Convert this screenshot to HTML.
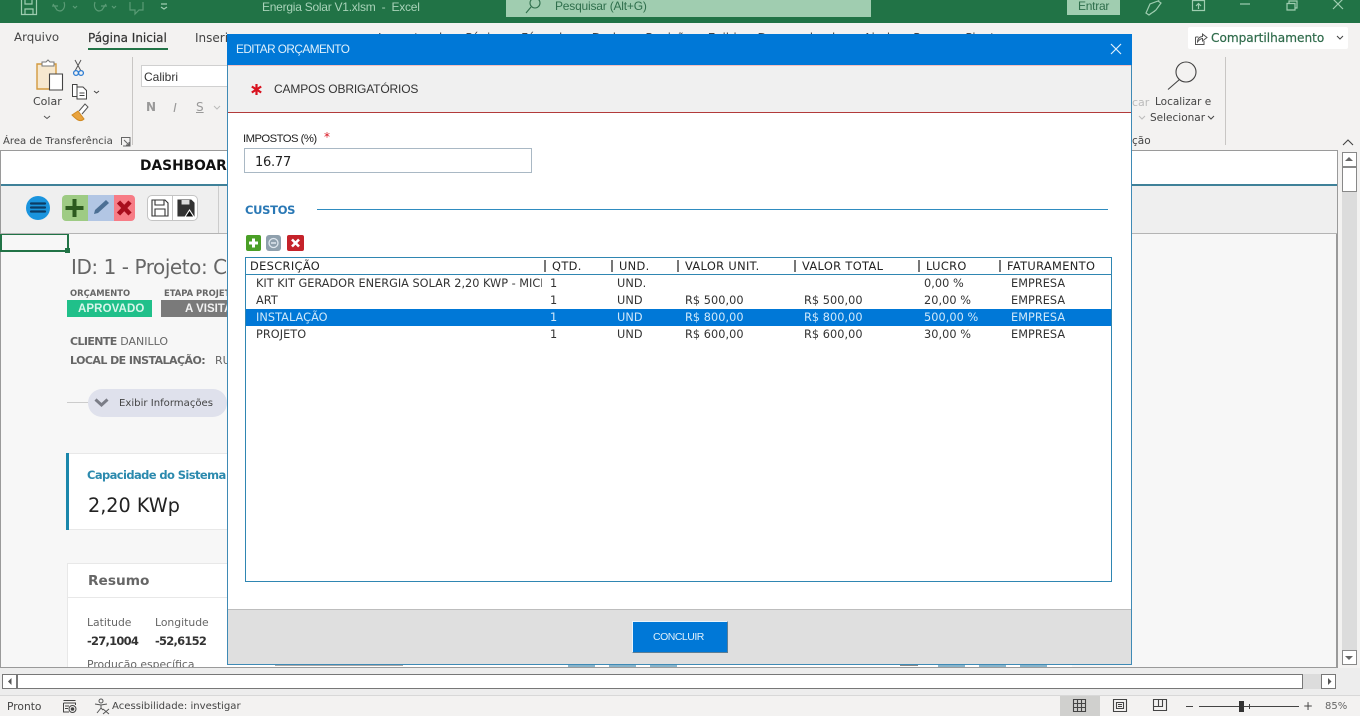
<!DOCTYPE html>
<html><head><meta charset="utf-8"><style>
html,body{margin:0;padding:0}
body{width:1360px;height:716px;overflow:hidden;position:relative;background:#f3f2f1;font-family:"DejaVu Sans","Liberation Sans",sans-serif;color:#333}
.t{position:absolute;white-space:nowrap;line-height:1}
.b{position:absolute}
svg{position:absolute;overflow:visible}
.ls{font-family:"Liberation Sans",sans-serif}
.c{font-size:11.3px;color:#333;letter-spacing:.05px}
.h{font-size:11.4px;color:#222;top:261px;letter-spacing:.35px}
.sep{position:absolute;top:260px;width:2px;height:12px;background:#777}
</style></head><body>
<!-- title bar -->
<div class="b" style="left:0;top:0;width:1360px;height:23px;background:#217346"></div>
<svg style="left:0;top:0" width="1360" height="23" fill="none" stroke="#9fcdb0" stroke-width="1.2">
<path d="M21.500 0V14.500H36.500V0M25 15V9H33V15M25 0V4H32V0"/>
<path d="M53 4L57 10C62 13 66 8 64 2M52 6H58" opacity=".45"/><path d="M73 6l2 2 2-2" opacity=".45"/>
<path d="M106 4L102 10C97 13 93 8 95 2M107 6H101" opacity=".45"/><path d="M112 6l2 2 2-2" opacity=".45"/>
<path d="M130 2V10H135V14L139 10H143V2" opacity=".45"/>
<path d="M161 4H167M161 7l3 2 3-2"/>
<path d="M1146 13L1150 4 1158 1 1161 3 1156 10 1149 15ZM1150 14L1155 11M1158 0L1162 -1"/>
<path d="M1192.500 .5H1204.500V10.500H1192.500ZM1198.500 9V4M1196 6L1198.500 3.500 1201 6"/>
<path d="M1240 4H1250"/>
<path d="M1287 3.500H1295V10H1287ZM1289 3V1H1297V8H1295"/>
<path d="M1333 -1L1343 9M1343 -1L1333 9"/>
</svg>
<div class="t ls" style="left:262px;top:1px;font-size:12px;color:#a9d3b9;letter-spacing:-.25px">Energia Solar V1.xlsm&nbsp; -&nbsp; Excel</div>
<div class="b" style="left:506px;top:0;width:365px;height:17px;background:#a0cdb0"></div>
<svg style="left:0;top:0" width="1360" height="23" fill="none" stroke="#2f6f4c" stroke-width="1.100"><circle cx="535" cy="3" r="5"/><path d="M531 7L526 13"/></svg>
<div class="t ls" style="left:555px;top:0;font-size:12px;color:#2f6f4c;letter-spacing:-.2px">Pesquisar (Alt+G)</div>
<div class="b" style="left:1067px;top:0;width:53px;height:15px;background:#a0cdb0"></div>
<div class="t ls" style="left:1078px;top:0;font-size:12px;color:#2f6f4c;letter-spacing:-.25px">Entrar</div>

<!-- ribbon tabs -->
<div class="t" style="left:14px;top:32px;font-size:11.800px;color:#444">Arquivo</div>
<div class="t" style="left:88px;top:32px;font-size:12px;color:#333;-webkit-text-stroke:.2px #333">Página Inicial</div>
<div class="b" style="left:88px;top:48px;width:80px;height:2px;background:#217346"></div>
<div class="t" style="left:195px;top:32px;font-size:12px;color:#444">Inserir</div>
<div class="t" style="left:378px;top:32px;font-size:12px;color:#444;word-spacing:12px">Layout da Página Fórmulas Dados Revisão Exibir Desenvolvedor Ajuda Power Pivot</div>
<div class="b" style="left:1188px;top:27px;width:160px;height:22px;background:#fff;border-radius:2px"></div>
<svg style="left:1194px;top:33px" width="14" height="12" fill="none" stroke="#555" stroke-width="1"><path d="M1.500 4V11.500H10V8M1.500 4H4.500M3.500 9C3.500 5.500 6 3.500 8.500 3.500V1L13 4.500 8.500 8V5.500C7 5.500 5 7 3.500 9Z"/></svg>
<div class="t" style="left:1211px;top:32px;font-size:12.100px;color:#2f6b4b;-webkit-text-stroke:.2px #2f6b4b">Compartilhamento</div>
<svg style="left:1336px;top:35px" width="10" height="6" fill="none" stroke="#444"><path d="M1 1l3 3 3-3"/></svg>

<!-- clipboard group -->
<svg style="left:30px;top:58px" width="80" height="70" fill="none">
<path d="M7 6H26V31H7Z" fill="#f6e8cf" stroke="#d39a3f" stroke-width="1.400"/>
<path d="M12 8V4H16L18 2 20 4H24V8Z" fill="#fff" stroke="#777"/>
<path d="M19.500 16H32.500V32H19.500Z" fill="#fff" stroke="#444" stroke-width="1.100"/>
<path d="M45 2L51 13M51 2L45 13" stroke="#555"/><circle cx="46" cy="15" r="2.400" stroke="#2b7cd3" stroke-width="1.300"/><circle cx="51" cy="15" r="2.400" stroke="#2b7cd3" stroke-width="1.300"/>
<path d="M42.500 26.500H47V38.500H42.500ZM47 29H53L56.500 32.500V41H47Z" fill="#fff" stroke="#444"/><path d="M49.500 35H54.500M49.500 37.500H54.500" stroke="#444"/>
<path d="M64 33l2.500 2 2.500-2" stroke="#444"/>
<path d="M42 57L48 53 54 61C50 65 46 61 42 57Z" fill="#e9a33d" stroke="#d18a22"/><path d="M49 53L55 46 58 49 52 56" fill="#fff" stroke="#555"/>
<path d="M14 58l3 2.500 3-2.500" stroke="#555"/>
</svg>
<div class="t" style="left:33px;top:96px;font-size:11px;color:#444">Colar</div>
<div class="t" style="left:3px;top:137px;font-size:10.100px;color:#444">Área de Transferência</div>
<svg style="left:120px;top:136px" width="12" height="12" fill="none" stroke="#666"><path d="M1.500 9V1.500H10V10H3M4 4L9 9M9 6V9H6"/></svg>
<div class="b" style="left:132px;top:57px;width:1px;height:88px;background:#c8c6c4"></div>
<div class="b" style="left:141px;top:65px;width:90px;height:22px;background:#fff;border:1px solid #d0d0d0;box-sizing:border-box"></div>
<div class="t ls" style="left:144px;top:71px;font-size:12px;color:#333">Calibri</div>
<div class="t" style="left:146px;top:101px;font-size:12px;font-weight:bold;color:#999">N</div>
<div class="t ls" style="left:173px;top:101px;font-size:13px;font-style:italic;color:#999">I</div>
<div class="t" style="left:196px;top:101px;font-size:12px;text-decoration:underline;color:#999">S</div>
<svg style="left:213px;top:105px" width="10" height="6" fill="none" stroke="#bbb"><path d="M1 1l3 3 3-3"/></svg>

<!-- right ribbon -->
<div class="t" style="left:1132px;top:97px;font-size:11px;color:#bbb">car</div>
<svg style="left:1138px;top:115px" width="10" height="6" fill="none" stroke="#bbb"><path d="M1 1l3 3 3-3"/></svg>
<div class="t" style="left:1132px;top:136px;font-size:10.500px;color:#444">ção</div>
<svg style="left:1165px;top:60px" width="40" height="32" fill="none" stroke="#444" stroke-width="1.100"><circle cx="21" cy="12" r="10"/><path d="M14.500 19.500L3 29.500"/></svg>
<div class="t" style="left:1155px;top:97px;font-size:10.500px;color:#444">Localizar e</div>
<div class="t" style="left:1150px;top:113px;font-size:10.500px;color:#444">Selecionar</div>
<svg style="left:1207px;top:115px" width="10" height="6" fill="none" stroke="#444"><path d="M1 1l3 3 3-3"/></svg>
<div class="b" style="left:1225px;top:57px;width:1px;height:88px;background:#c8c6c4"></div>
<svg style="left:1341px;top:139px" width="14" height="8" fill="none" stroke="#444" stroke-width="1.100"><path d="M2 6l5-5 5 5"/></svg>

<!-- sheet -->
<div class="b" style="left:0;top:150px;width:1338px;height:518px;background:#f7f7f7;border:1px solid #9a9a9a;box-sizing:border-box;border-right-width:2px"></div>
<div class="b" style="left:1px;top:151px;width:1336px;height:33px;background:#fff"></div>
<div class="b" style="left:1px;top:184px;width:1336px;height:2px;background:#3f8199"></div>
<div class="b" style="left:1px;top:186px;width:1336px;height:47px;background:#efefef"></div>
<div class="b" style="left:1px;top:233px;width:1336px;height:1px;background:#b4b4b4"></div>
<div class="t" style="left:140px;top:160px;font-size:13.800px;font-weight:bold;color:#111">DASHBOARD</div>
<div class="b" style="left:218px;top:186px;width:1px;height:47px;background:#ccc"></div>
<!-- toolbar icons -->
<div class="b" style="left:26px;top:196px;width:24px;height:24px;border-radius:50%;background:#1a94de"></div>
<svg style="left:30px;top:202px" width="16" height="12"><path d="M1 1.500H15M1 5.500H15M1 9.500H15" stroke="#0c3c66" stroke-width="2.200" stroke-linecap="round"/></svg>
<div class="b" style="left:62px;top:195px;width:26px;height:26px;border-radius:4px 0 0 4px;background:#9ecb84"></div>
<div class="b" style="left:88px;top:195px;width:26px;height:26px;background:#b2c6e4"></div>
<div class="b" style="left:114px;top:195px;width:21px;height:26px;border-radius:0 4px 4px 0;background:#f77c86"></div>
<svg style="left:62px;top:195px" width="74" height="26"><path d="M12.500 4V22M3.500 13H21.500" stroke="#2c5a1e" stroke-width="4"/><path d="M32 19L33 15 44 5 47 8 36 18Z" fill="#4c6f94"/><path d="M56.500 7L68 19M68 7L56.500 19" stroke="#a80d1d" stroke-width="4.500"/></svg>
<div class="b" style="left:147px;top:195px;width:51px;height:26px;background:#fff;border:1px solid #c4c4c4;border-radius:5px;box-sizing:border-box"></div>
<div class="b" style="left:172px;top:196px;width:1px;height:24px;background:#c4c4c4"></div>
<svg style="left:147px;top:195px" width="52" height="26" fill="none" stroke="#333" stroke-width="1.100"><path d="M5 5H18L21 8V21H5ZM8 5V10H17V5M8 21V14H18V21"/><path d="M31 5H44L47 8V21H31Z" fill="#333"/><path d="M34 5V10H43V5" fill="#ddd"/><path d="M38 22L42.500 15 47 22Z" fill="#111" stroke="#fff"/></svg>
<!-- selected cell -->
<div class="b" style="left:0;top:234px;width:69px;height:18px;border:2px solid #217346;box-sizing:border-box;border-top-width:1px"></div>
<div class="b" style="left:65px;top:248px;width:5px;height:5px;background:#217346"></div>

<div class="t" style="left:71px;top:257px;font-size:20px;color:#666;letter-spacing:-.45px">ID: 1 - Projeto: CA</div>
<div class="t" style="left:70px;top:289px;font-size:8.400px;font-weight:bold;color:#666">ORÇAMENTO</div>
<div class="t" style="left:164px;top:289px;font-size:8.400px;font-weight:bold;color:#666">ETAPA PROJETO</div>
<div class="b" style="left:67px;top:300px;width:85px;height:17px;background:#20c08a"></div>
<div class="t ls" style="left:78px;top:304px;font-size:11.500px;font-weight:bold;color:#d8f5ea;letter-spacing:.1px">APROVADO</div>
<div class="b" style="left:161px;top:300px;width:66px;height:17px;background:#7a7a7a"></div>
<div class="t ls" style="left:185px;top:304px;font-size:11.500px;font-weight:bold;color:#f2f2f2">A VISITA</div>
<div class="t" style="left:70px;top:336px;font-size:11px;color:#666"><b style="letter-spacing:-.6px">CLIENTE</b> DANILLO</div>
<div class="t" style="left:70px;top:355px;font-size:11px;color:#666"><b style="letter-spacing:-.55px">LOCAL DE INSTALAÇÃO:</b><span style="position:absolute;left:145px;top:0">RUA</span></div>
<div class="b" style="left:67px;top:402px;width:22px;height:1px;background:#ccc"></div>
<div class="b" style="left:88px;top:389px;width:139px;height:28px;border-radius:14px;background:#dfe1ec"></div>
<svg style="left:94px;top:398px" width="16" height="10" fill="none" stroke="#7b7d87" stroke-width="3"><path d="M1.500 1.500L7.500 7 13.500 1.500"/></svg>
<div class="t" style="left:119px;top:399px;font-size:10.100px;color:#444">Exibir Informações</div>
<div class="b" style="left:66px;top:453px;width:161px;height:77px;background:#fff;border-bottom:1px solid #e8e8e8;border-top:1px solid #e8e8e8;box-sizing:border-box"></div>
<div class="b" style="left:66px;top:453px;width:3px;height:77px;background:#1a87ab"></div>
<div class="t" style="left:87px;top:470px;font-size:11.500px;font-weight:bold;color:#2c8aae;letter-spacing:-.6px">Capacidade do Sistema</div>
<div class="t" style="left:88px;top:496px;font-size:19.200px;color:#222">2,20 KWp</div>
<div class="b" style="left:67px;top:563px;width:160px;height:104px;background:#fff;border:1px solid #e8e8e8;border-right:0;border-bottom:0;box-sizing:border-box"></div>
<div class="b" style="left:68px;top:597px;width:159px;height:1px;background:#e8e8e8"></div>
<div class="t" style="left:88px;top:575px;font-size:13.700px;font-weight:bold;color:#666">Resumo</div>
<div class="t" style="left:87px;top:618px;font-size:10.800px;color:#666">Latitude</div>
<div class="t" style="left:155px;top:618px;font-size:10.800px;color:#666">Longitude</div>
<div class="t" style="left:87px;top:636px;font-size:11.500px;font-weight:bold;color:#333;letter-spacing:-.75px">-27,1004</div>
<div class="t" style="left:155px;top:636px;font-size:11.500px;font-weight:bold;color:#333;letter-spacing:-.75px">-52,6152</div>
<div class="b" style="left:87px;top:658px;width:140px;height:9px;overflow:hidden"><div class="t" style="left:0;top:2px;font-size:10.800px;color:#666">Produção específica</div></div>

<!-- bottom remnants -->
<div class="b" style="left:227px;top:665px;width:845px;height:2px;background:#fff"></div>
<div class="b" style="left:275px;top:665px;width:128px;height:1px;background:#aaa"></div>
<div class="b" style="left:568px;top:665px;width:27px;height:2px;background:#88b4cb"></div>
<div class="b" style="left:609px;top:665px;width:27px;height:2px;background:#88b4cb"></div>
<div class="b" style="left:650px;top:665px;width:27px;height:2px;background:#88b4cb"></div>
<div class="b" style="left:900px;top:665px;width:18px;height:1px;background:#888"></div>
<div class="b" style="left:938px;top:665px;width:27px;height:2px;background:#88b4cb"></div>
<div class="b" style="left:979px;top:665px;width:27px;height:2px;background:#88b4cb"></div>
<div class="b" style="left:1020px;top:665px;width:27px;height:2px;background:#88b4cb"></div>

<!-- vertical scrollbar -->
<div class="b" style="left:1339px;top:151px;width:21px;height:517px;background:#f3f2f1"></div>
<div class="b" style="left:1342px;top:167px;width:15px;height:498px;background:#dcdcdc"></div>
<div class="b" style="left:1342px;top:152px;width:15px;height:15px;background:#fff;border:1px solid #888;box-sizing:border-box"></div>
<div class="b" style="left:1342px;top:167px;width:15px;height:25px;background:#fff;border:1px solid #888;box-sizing:border-box"></div>
<div class="b" style="left:1342px;top:650px;width:15px;height:15px;background:#fff;border:1px solid #888;box-sizing:border-box"></div>
<svg style="left:1345px;top:156px" width="10" height="6"><path d="M0 5H8L4 1Z" fill="#666"/></svg>
<svg style="left:1345px;top:655px" width="10" height="6"><path d="M0 1H8L4 5Z" fill="#666"/></svg>

<!-- horizontal scrollbar -->
<div class="b" style="left:0;top:668px;width:1360px;height:27px;background:#ededed"></div>
<div class="b" style="left:2px;top:674px;width:1321px;height:15px;background:#dcdcdc"></div>
<div class="b" style="left:2px;top:674px;width:15px;height:15px;background:#fff;border:1px solid #777;box-sizing:border-box"></div>
<div class="b" style="left:17px;top:674px;width:1286px;height:15px;background:#fff;border:1px solid #777;box-sizing:border-box"></div>
<div class="b" style="left:1321px;top:674px;width:15px;height:15px;background:#fff;border:1px solid #777;box-sizing:border-box"></div>
<svg style="left:7px;top:678px" width="6" height="8"><path d="M4.500 0V7L1 3.500Z" fill="#555"/></svg>
<svg style="left:1327px;top:678px" width="6" height="8"><path d="M1 0V7L4.500 3.500Z" fill="#555"/></svg>

<!-- status bar -->
<div class="b" style="left:0;top:695px;width:1360px;height:21px;background:#f3f2f1;border-top:1px solid #d8d8d8;box-sizing:border-box"></div>
<div class="t" style="left:7px;top:702px;font-size:10.700px;color:#444">Pronto</div>
<svg style="left:62px;top:700px" width="16" height="14" fill="none" stroke="#444"><path d="M1.500 .5H13.500M1.500 3H13.500V5M1.500 3V12H7M3 6H7M3 8.500H6"/><circle cx="10.500" cy="9" r="3.500"/><circle cx="10.500" cy="9" r="1.300" fill="#444"/></svg>
<svg style="left:94px;top:698px" width="16" height="17" fill="none" stroke="#555"><circle cx="7" cy="3" r="2"/><path d="M1 6L7 7 13 6M7 7V10L3 15M7 10L9 12M9 11L15 16M15 11L9 16"/></svg>
<div class="t" style="left:112px;top:702px;font-size:10.100px;color:#444">Acessibilidade: investigar</div>
<div class="b" style="left:1060px;top:696px;width:40px;height:20px;background:#d0d0ce"></div>
<svg style="left:1070px;top:698px" width="150" height="16" fill="none" stroke="#444" stroke-width="1.100"><path d="M3.500 1.500H15.500V13.500H3.500ZM7.500 1.500V13.500M11.500 1.500V13.500M3.500 5.500H15.500M3.500 9.500H15.500"/><path d="M43.500 1.500H56.500V13.500H43.500ZM46.500 4.500H53.500V10.500H46.500ZM48 6.500H52M48 8.500H52"/><path d="M83.500 1.500H96.500V12.500H83.500ZM83.500 8.500H92.500V1.500M88.500 1.500V8.500"/></svg>
<div class="b" style="left:1186px;top:706px;width:7px;height:1px;background:#444"></div>
<div class="b" style="left:1199px;top:706px;width:100px;height:1px;background:#444"></div>
<div class="b" style="left:1239px;top:701px;width:5px;height:11px;background:#333"></div>
<div class="b" style="left:1249px;top:704px;width:1px;height:5px;background:#444"></div>
<div class="t" style="left:1303px;top:700px;font-size:12px;color:#444">+</div>
<div class="t" style="left:1325px;top:702px;font-size:10px;color:#666">85%</div>

<!-- dialog -->
<div class="b" style="left:227px;top:34px;width:905px;height:631px;background:#fff;border:1px solid #3f8ab5;box-sizing:border-box"></div>
<div class="b" style="left:227px;top:34px;width:905px;height:31px;background:#0078d7"></div>
<div class="t ls" style="left:236px;top:44px;font-size:11.800px;color:#dff0fb;letter-spacing:-.55px">EDITAR ORÇAMENTO</div>
<svg style="left:1110px;top:43px" width="12" height="12" fill="none" stroke="#dff0fb" stroke-width="1.200"><path d="M1 1L11 11M11 1L1 11"/></svg>
<div class="b" style="left:228px;top:65px;width:903px;height:48px;background:#f0f0f0;border-top:1px solid #f4c0c0;border-bottom:1px solid #b23a3a;box-sizing:border-box"></div>
<svg style="left:251px;top:84px" width="11" height="11" stroke="#d8121f" stroke-width="2.200"><path d="M5.500 0V11M.800 2.500L10.200 8.500M10.200 2.500L.800 8.500"/></svg>
<div class="t ls" style="left:274px;top:83px;font-size:12px;color:#333;letter-spacing:-.15px">CAMPOS OBRIGATÓRIOS</div>
<div class="t ls" style="left:243px;top:134px;font-size:11.300px;color:#222;letter-spacing:-.55px">IMPOSTOS (%)</div>
<div class="t" style="left:324px;top:131px;font-size:12px;color:#d8121f">*</div>
<div class="b" style="left:244px;top:148px;width:288px;height:25px;background:#fff;border:1px solid #a9b8c4;box-sizing:border-box"></div>
<div class="t" style="left:255px;top:156px;font-size:13px;color:#222;letter-spacing:-.25px">16.77</div>
<div class="t" style="left:245px;top:205px;font-size:11.500px;font-weight:bold;color:#2a78b5;letter-spacing:-.3px">CUSTOS</div>
<div class="b" style="left:317px;top:209px;width:791px;height:1px;background:#2f8cc0"></div>
<svg style="left:246px;top:235px" width="60" height="17">
<rect x="0" y="0" width="15" height="16" rx="2" fill="#4a9f26"/><path d="M7.500 3.500V12.500M3 8H12" stroke="#fff" stroke-width="3"/>
<rect x="20" y="0" width="15" height="16" rx="3" fill="#8fa0ad"/><circle cx="27.500" cy="8" r="4.500" fill="none" stroke="#dfe7ee" stroke-width="1.300"/><path d="M25 8H30" stroke="#dfe7ee" stroke-width="1.500"/>
<rect x="41" y="0" width="17" height="16" rx="2" fill="#c5222a"/><path d="M46 4.500L53 11.500M53 4.500L46 11.500" stroke="#fff" stroke-width="2.600"/>
</svg>

<!-- grid -->
<div class="b" style="left:245px;top:257px;width:867px;height:325px;background:#fff;border:1px solid #2f86b2;box-sizing:border-box"></div>
<div class="b" style="left:246px;top:274px;width:865px;height:1px;background:#2f86b2"></div>
<div class="t h" style="left:250px">DESCRIÇÃO</div>
<div class="sep" style="left:544px"></div><div class="t h" style="left:552px">QTD.</div>
<div class="sep" style="left:611px"></div><div class="t h" style="left:619px">UND.</div>
<div class="sep" style="left:677px"></div><div class="t h" style="left:685px">VALOR UNIT.</div>
<div class="sep" style="left:794px"></div><div class="t h" style="left:802px">VALOR TOTAL</div>
<div class="sep" style="left:918px"></div><div class="t h" style="left:926px">LUCRO</div>
<div class="sep" style="left:999px"></div><div class="t h" style="left:1007px">FATURAMENTO</div>
<div class="b" style="left:246px;top:309px;width:865px;height:17px;background:#0078d7"></div>
<div class="b" style="left:256px;top:275px;width:286px;height:17px;overflow:hidden"><div class="t c" style="left:0;top:3px;letter-spacing:0">KIT KIT GERADOR ENERGIA SOLAR 2,20 KWP - MICROINVERSOR</div></div>
<div class="t c" style="left:550px;top:278px">1</div><div class="t c" style="left:617px;top:278px">UND.</div><div class="t c" style="left:924px;top:278px">0,00 %</div><div class="t c" style="left:1011px;top:278px">EMPRESA</div>
<div class="t c" style="left:256px;top:295px">ART</div><div class="t c" style="left:550px;top:295px">1</div><div class="t c" style="left:617px;top:295px">UND</div><div class="t c" style="left:685px;top:295px">R$ 500,00</div><div class="t c" style="left:804px;top:295px">R$ 500,00</div><div class="t c" style="left:924px;top:295px">20,00 %</div><div class="t c" style="left:1011px;top:295px">EMPRESA</div>
<div class="t c" style="left:256px;top:312px;color:#cfe8fa">INSTALAÇÃO</div><div class="t c" style="left:550px;top:312px;color:#cfe8fa">1</div><div class="t c" style="left:617px;top:312px;color:#cfe8fa">UND</div><div class="t c" style="left:685px;top:312px;color:#cfe8fa">R$ 800,00</div><div class="t c" style="left:804px;top:312px;color:#cfe8fa">R$ 800,00</div><div class="t c" style="left:924px;top:312px;color:#cfe8fa">500,00 %</div><div class="t c" style="left:1011px;top:312px;color:#cfe8fa">EMPRESA</div>
<div class="t c" style="left:256px;top:329px">PROJETO</div><div class="t c" style="left:550px;top:329px">1</div><div class="t c" style="left:617px;top:329px">UND</div><div class="t c" style="left:685px;top:329px">R$ 600,00</div><div class="t c" style="left:804px;top:329px">R$ 600,00</div><div class="t c" style="left:924px;top:329px">30,00 %</div><div class="t c" style="left:1011px;top:329px">EMPRESA</div>

<!-- footer -->
<div class="b" style="left:228px;top:609px;width:903px;height:55px;background:#dfdfdf;border-top:1px solid #bdbdbd;box-sizing:border-box"></div>
<div class="b" style="left:632px;top:621px;width:96px;height:32px;background:#0078d7;border:1px solid;border-color:#eaf4fb #5c7d94 #5c7d94 #eaf4fb;box-sizing:border-box"></div>
<div class="t ls" style="left:653px;top:632px;font-size:10.500px;color:#dff0fb;letter-spacing:-.5px">CONCLUIR</div>
</body></html>
